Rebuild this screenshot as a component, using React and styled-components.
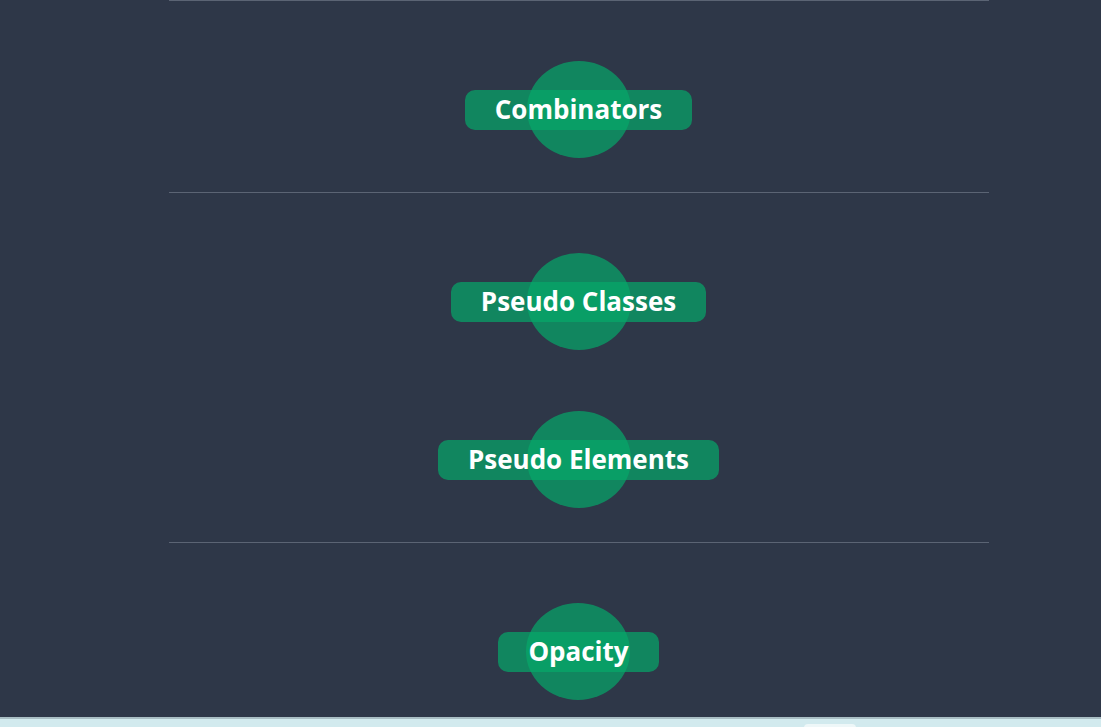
import React from 'react';
import styled, { createGlobalStyle } from 'styled-components';

const GlobalStyle = createGlobalStyle`
  html, body {
    margin: 0;
    padding: 0;
    background: #2e3748;
    font-family: "Open Sans", "Noto Sans", sans-serif;
    overflow: hidden;
  }
`;

const Page = styled.div`
  height: 727px;
  display: flex;
  flex-direction: column;
`;

const Main = styled.main`
  flex: 1;
  padding-left: 56px;
  overflow: hidden;
`;

const Container = styled.div`
  width: 820px;
  margin: 0 auto;
`;

const Section = styled.section`
  border-top: 1px solid #5b6474;
  padding-bottom: 34px;
  display: flex;
  flex-direction: column;
  align-items: center;
`;

const Topic = styled.div`
  position: relative;
  margin-top: 60px;
  height: 97px;
  display: flex;
  align-items: center;
  justify-content: center;

  & + & {
    margin-top: 61px;
  }

  &::before {
    content: '';
    position: absolute;
    left: 50%;
    top: 0;
    width: 104px;
    height: 97px;
    transform: translateX(-50%);
    border-radius: 50%;
    background: rgba(6, 168, 106, 0.7);
  }
`;

const Pill = styled.span`
  position: relative;
  height: 40px;
  padding: 0 30px;
  border-radius: 10px;
  background: rgba(6, 168, 106, 0.7);
  color: #fff;
  font-weight: 700;
  font-size: 26px;
  line-height: 39px;
  white-space: nowrap;
`;

const Footer = styled.div`
  height: 8px;
  border-top: 2px solid #a9bec4;
  background: #d2eaee;
  position: relative;
`;

const FooterTab = styled.div`
  position: absolute;
  left: 804px;
  top: 5px;
  width: 52px;
  height: 10px;
  border-radius: 4px 4px 0 0;
  background: #eef7f8;
`;

const sections = [
  ['Combinators'],
  ['Pseudo Classes', 'Pseudo Elements'],
  ['Opacity'],
];

export default function App() {
  return (
    <Page>
      <GlobalStyle />
      <Main>
        <Container>
          {sections.map((items, i) => (
            <Section key={i}>
              {items.map((label) => (
                <Topic key={label}>
                  <Pill>{label}</Pill>
                </Topic>
              ))}
            </Section>
          ))}
        </Container>
      </Main>
      <Footer>
        <FooterTab />
      </Footer>
    </Page>
  );
}
